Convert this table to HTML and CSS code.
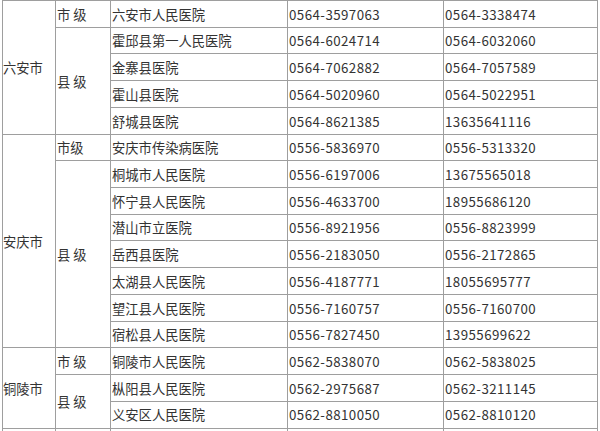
FILE: index.html
```html
<!DOCTYPE html>
<html lang="zh-CN">
<head>
<meta charset="utf-8">
<title>医院电话</title>
<link rel="stylesheet" href="styles.css">
</head>
<body>
<div class="sheet">
  <div class="c city span5">六安市</div>
  <div class="c lvl">市 级</div>
  <div class="c">六安市人民医院</div>
  <div class="c tel">0564-3597063</div>
  <div class="c tel">0564-3338474</div>

  <div class="c lvl span4">县 级</div>
  <div class="c">霍邱县第一人民医院</div>
  <div class="c tel">0564-6024714</div>
  <div class="c tel">0564-6032060</div>

  <div class="c">金寨县医院</div>
  <div class="c tel">0564-7062882</div>
  <div class="c tel">0564-7057589</div>

  <div class="c">霍山县医院</div>
  <div class="c tel">0564-5020960</div>
  <div class="c tel">0564-5022951</div>

  <div class="c">舒城县医院</div>
  <div class="c tel">0564-8621385</div>
  <div class="c tel">13635641116</div>

  <div class="c city span8">安庆市</div>
  <div class="c lvl">市级</div>
  <div class="c">安庆市传染病医院</div>
  <div class="c tel">0556-5836970</div>
  <div class="c tel">0556-5313320</div>

  <div class="c lvl span7">县 级</div>
  <div class="c">桐城市人民医院</div>
  <div class="c tel">0556-6197006</div>
  <div class="c tel">13675565018</div>

  <div class="c">怀宁县人民医院</div>
  <div class="c tel">0556-4633700</div>
  <div class="c tel">18955686120</div>

  <div class="c">潜山市立医院</div>
  <div class="c tel">0556-8921956</div>
  <div class="c tel">0556-8823999</div>

  <div class="c">岳西县医院</div>
  <div class="c tel">0556-2183050</div>
  <div class="c tel">0556-2172865</div>

  <div class="c">太湖县人民医院</div>
  <div class="c tel">0556-4187771</div>
  <div class="c tel">18055695777</div>

  <div class="c">望江县人民医院</div>
  <div class="c tel">0556-7160757</div>
  <div class="c tel">0556-7160700</div>

  <div class="c">宿松县人民医院</div>
  <div class="c tel">0556-7827450</div>
  <div class="c tel">13955699622</div>

  <div class="c city span3">铜陵市</div>
  <div class="c lvl">市 级</div>
  <div class="c">铜陵市人民医院</div>
  <div class="c tel">0562-5838070</div>
  <div class="c tel">0562-5838025</div>

  <div class="c lvl span2">县 级</div>
  <div class="c">枞阳县人民医院</div>
  <div class="c tel">0562-2975687</div>
  <div class="c tel">0562-3211145</div>

  <div class="c">义安区人民医院</div>
  <div class="c tel">0562-8810050</div>
  <div class="c tel">0562-8810120</div>

  <div class="c"></div>
  <div class="c"></div>
  <div class="c"></div>
  <div class="c"></div>
  <div class="c"></div>
</div>
</body>
</html>
```

FILE: styles.css
```css
html, body {
  margin: 0;
  padding: 0;
  background: #ffffff;
  overflow: hidden;
}

body {
  width: 600px;
  height: 431px;
  font-family: "Noto Sans CJK SC", "Noto Sans", sans-serif;
  font-size: 13.3px;
  color: #333333;
}

.sheet {
  margin-left: 2px;
  width: 596px;
  display: grid;
  grid-template-columns: 52px 54px 176px 155px 153px;
  grid-template-rows: repeat(16, 25.73px) 2.27px;
  gap: 1px;
  padding: 1px 1px 0 1px;
  box-sizing: border-box;
  background: #9e9e9e;
}

.c {
  background: #ffffff;
  display: flex;
  align-items: center;
  padding: 1px 0 0 1px;
  white-space: nowrap;
  overflow: hidden;
  line-height: 1;
}

.tel {
  letter-spacing: 0.45px;
}

.city { padding-left: 0; }
.lvl { padding-left: 1px; }

.span2 { grid-row: span 2; }
.span3 { grid-row: span 3; }
.span4 { grid-row: span 4; }
.span5 { grid-row: span 5; }
.span7 { grid-row: span 7; }
.span8 { grid-row: span 8; }
```
